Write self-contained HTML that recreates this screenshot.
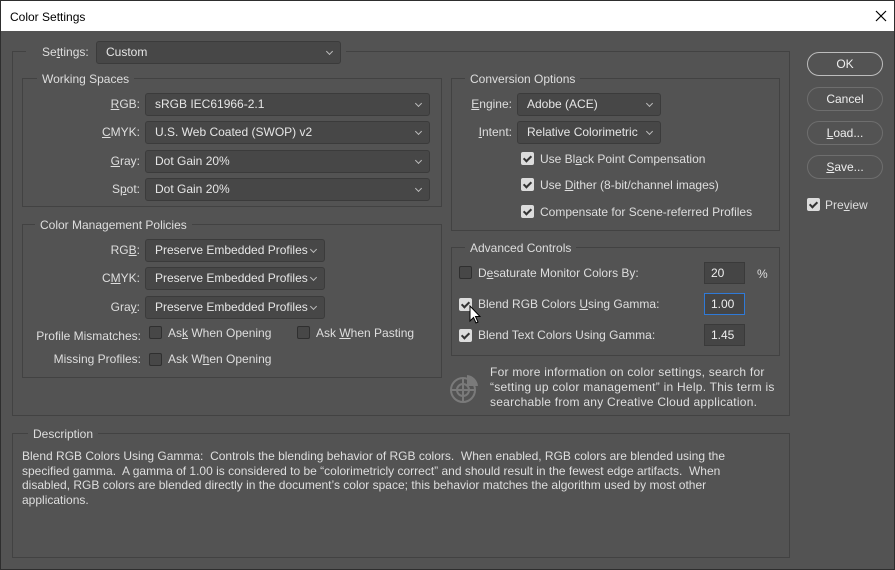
<!DOCTYPE html>
<html><head><meta charset="utf-8"><style>
*{box-sizing:border-box;margin:0;padding:0}
body{width:895px;height:570px;overflow:hidden;background:#535353;font-family:"Liberation Sans",sans-serif;font-size:12px;color:#dedede;position:relative}
.a{position:absolute;white-space:nowrap}
.tb{position:absolute;left:0;top:0;width:895px;height:31px;background:#fff;color:#000;border:1px solid #333;border-bottom:none}
.win{position:absolute;left:0;top:0;width:895px;height:570px;border:1px solid #2e2e2e;pointer-events:none}
.g{position:absolute;border:1px solid #424242}
.gl{position:absolute;background:#535353;padding:0 5px;line-height:14px}
.dd{position:absolute;height:23px;background:#474747;border:1px solid #3b3b3b;border-radius:3px;padding-left:9px;line-height:21px;color:#e6e6e6}
.dd:after{content:"";position:absolute;right:8px;top:7px;width:4px;height:4px;border-right:1px solid #bbb;border-bottom:1px solid #bbb;transform:rotate(45deg)}
.lb{position:absolute;text-align:right;line-height:14px}
.cb{position:absolute;width:13px;height:13px;border:1px solid #2f2f2f;background:#474747;border-radius:2px}
.ck{background:#dcdcdc;border-color:#dcdcdc}
.ck:after{content:"";position:absolute;left:3px;top:1px;width:3px;height:6px;border-right:2px solid #333;border-bottom:2px solid #333;transform:rotate(45deg)}
.in{position:absolute;width:41px;height:22px;background:#454545;border:1px solid #3a3a3a;padding-left:6px;line-height:20px;color:#eee}
.bt{position:absolute;left:807px;width:76px;height:24px;border:1px solid #8a8a8a;border-radius:12px;text-align:center;line-height:22px;color:#eee}
u{text-decoration:underline}
</style></head><body>
<div class="tb"><span class="a" style="left:9px;top:9px;font-size:12px">Color Settings</span>
<svg class="a" style="left:874px;top:9px" width="12" height="12"><path d="M1 1L11 11M11 1L1 11" stroke="#000" stroke-width="1.2"/></svg></div>

<div class="g" style="left:12px;top:51px;width:778px;height:365px"></div>
<div class="a" style="left:26px;top:42px;width:320px;height:22px;background:#535353"></div>
<span class="a" style="left:42px;top:45px">Se<u>t</u>tings:</span>
<div class="dd" style="left:96px;top:41px;width:245px">Custom</div>

<div class="g" style="left:22px;top:78px;width:420px;height:129px"></div>
<span class="gl" style="left:37px;top:72px">Working Spaces</span>
<div class="lb" style="left:60px;top:97px;width:80px"><u>R</u>GB:</div>
<div class="lb" style="left:60px;top:125px;width:80px"><u>C</u>MYK:</div>
<div class="lb" style="left:60px;top:154px;width:80px"><u>G</u>ray:</div>
<div class="lb" style="left:60px;top:182px;width:80px">S<u>p</u>ot:</div>
<div class="dd" style="left:145px;top:93px;width:285px">sRGB IEC61966-2.1</div>
<div class="dd" style="left:145px;top:121px;width:285px">U.S. Web Coated (SWOP) v2</div>
<div class="dd" style="left:145px;top:150px;width:285px">Dot Gain 20%</div>
<div class="dd" style="left:145px;top:178px;width:285px">Dot Gain 20%</div>

<div class="g" style="left:22px;top:224px;width:420px;height:154px"></div>
<span class="gl" style="left:35px;top:218px">Color Management Policies</span>
<div class="lb" style="left:40px;top:243px;width:100px">RG<u>B</u>:</div>
<div class="lb" style="left:40px;top:271px;width:100px">C<u>M</u>YK:</div>
<div class="lb" style="left:40px;top:300px;width:100px">Gra<u>y</u>:</div>
<div class="dd" style="left:145px;top:239px;width:180px">Preserve Embedded Profiles</div>
<div class="dd" style="left:145px;top:267px;width:180px">Preserve Embedded Profiles</div>
<div class="dd" style="left:145px;top:296px;width:180px">Preserve Embedded Profiles</div>
<div class="lb" style="left:20px;top:329px;width:121px">Profile Mismatches:</div>
<div class="cb" style="left:149px;top:326px"></div><span class="a" style="left:168px;top:326px">As<u>k</u> When Opening</span>
<div class="cb" style="left:297px;top:326px"></div><span class="a" style="left:316px;top:326px">Ask <u>W</u>hen Pasting</span>
<div class="lb" style="left:20px;top:352px;width:121px">Missing Profiles:</div>
<div class="cb" style="left:149px;top:353px"></div><span class="a" style="left:168px;top:352px">Ask W<u>h</u>en Opening</span>

<div class="g" style="left:451px;top:78px;width:329px;height:153px"></div>
<span class="gl" style="left:465px;top:72px">Conversion Options</span>
<div class="lb" style="left:440px;top:97px;width:72px"><u>E</u>ngine:</div>
<div class="lb" style="left:440px;top:125px;width:72px"><u>I</u>ntent:</div>
<div class="dd" style="left:517px;top:93px;width:144px">Adobe (ACE)</div>
<div class="dd" style="left:517px;top:121px;width:144px">Relative Colorimetric</div>
<div class="cb ck" style="left:521px;top:152px"></div><span class="a" style="left:540px;top:152px">Use Bl<u>a</u>ck Point Compensation</span>
<div class="cb ck" style="left:521px;top:178px"></div><span class="a" style="left:540px;top:178px">Use <u>D</u>ither (8-bit/channel images)</span>
<div class="cb ck" style="left:521px;top:205px"></div><span class="a" style="left:540px;top:205px">Compensate for Scene-referred Profiles</span>

<div class="g" style="left:451px;top:247px;width:329px;height:109px"></div>
<span class="gl" style="left:465px;top:241px">Advanced Controls</span>
<div class="cb" style="left:459px;top:266px"></div><span class="a" style="left:478px;top:266px">D<u>e</u>saturate Monitor Colors By:</span>
<div class="in" style="left:704px;top:262px">20</div><span class="a" style="left:757px;top:267px">%</span>
<div class="cb ck" style="left:459px;top:298px"></div><span class="a" style="left:478px;top:297px">Blend RGB Colors <u>U</u>sing Gamma:</span>
<div class="in" style="left:704px;top:293px;border-color:#2f7ad8">1.00</div>
<div class="cb ck" style="left:459px;top:329px"></div><span class="a" style="left:478px;top:328px">Blend Text Colors Using Gamma:</span>
<div class="in" style="left:704px;top:324px">1.45</div>
<svg class="a" style="left:469px;top:305px" width="12" height="20"><path d="M1 1L1 16L4.5 12.5L7 18L9 17L6.5 11.5L11 11.5Z" fill="#fff" stroke="#000" stroke-width="1"/></svg>

<svg class="a" style="left:449px;top:372px" width="32" height="32" fill="none" stroke="#7a7a7a" stroke-width="2"><circle cx="14" cy="18" r="12"/><circle cx="14" cy="18" r="6"/><path d="M14 6V30M2 18H26"/><path d="M18 3A12 12 0 0 1 29 14H18Z" fill="#7a7a7a" stroke="none"/></svg>
<div class="a" style="left:490px;top:365px;line-height:15px;letter-spacing:0.25px">For more information on color settings, search for<br>“setting up color management” in Help. This term is<br>searchable from any Creative Cloud application.</div>

<div class="bt" style="top:52px;border-color:#bdbdbd">OK</div>
<div class="bt" style="top:87px;border-color:#6e6e6e">Cancel</div>
<div class="bt" style="top:121px;border-color:#6e6e6e"><u>L</u>oad...</div>
<div class="bt" style="top:155px;border-color:#6e6e6e"><u>S</u>ave...</div>
<div class="cb ck" style="left:807px;top:198px"></div><span class="a" style="left:825px;top:198px">Pre<u>v</u>iew</span>

<div class="g" style="left:12px;top:433px;width:778px;height:125px"></div>
<span class="gl" style="left:28px;top:427px">Description</span>
<div class="a" style="left:22px;top:449px;line-height:14.5px">Blend RGB Colors Using Gamma:&nbsp; Controls the blending behavior of RGB colors.&nbsp; When enabled, RGB colors are blended using the<br>specified gamma.&nbsp; A gamma of 1.00 is considered to be “colorimetricly correct” and should result in the fewest edge artifacts.&nbsp; When<br>disabled, RGB colors are blended directly in the document’s color space; this behavior matches the algorithm used by most other<br>applications.</div>
<div class="win"></div>
</body></html>
